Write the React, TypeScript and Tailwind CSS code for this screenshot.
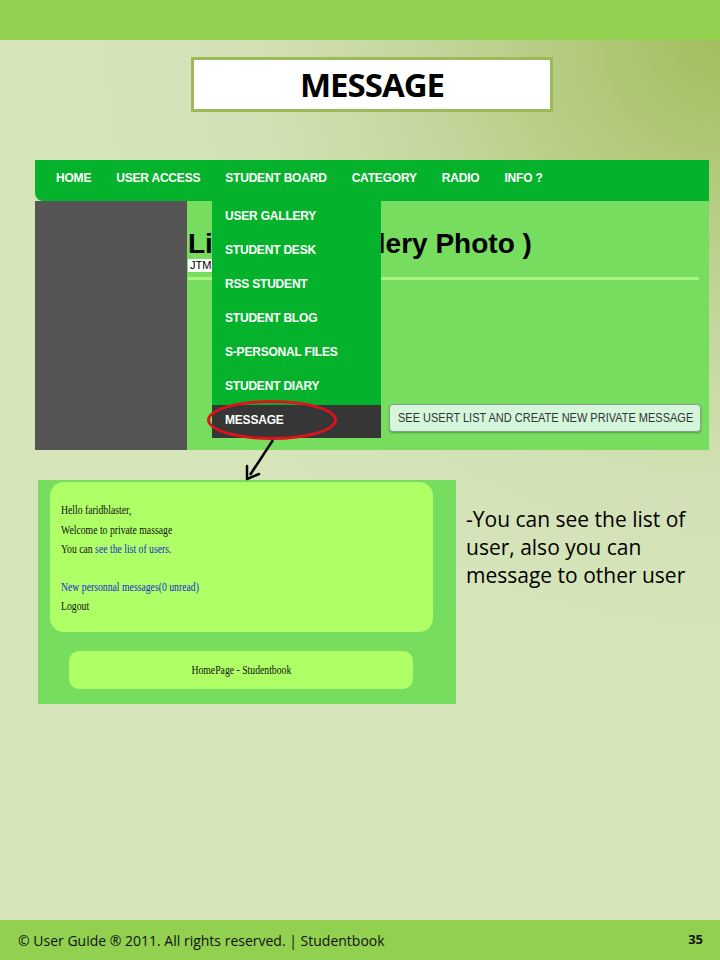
import React from "react";

const navItems = ["HOME", "USER ACCESS", "STUDENT BOARD", "CATEGORY", "RADIO", "INFO ?"];
const boardItems = ["USER GALLERY", "STUDENT DESK", "RSS STUDENT", "STUDENT BLOG", "S-PERSONAL FILES", "STUDENT DIARY"];

function SiteScreenshot() {
  return (
    <div className="relative ml-[35px] mt-[48px] flex h-[290px] w-[674px] flex-col font-['Liberation_Sans',Arial,sans-serif]">
      {/* nav bar */}
      <div className="flex h-[41px] items-center gap-[25px] rounded-bl-[8px] bg-[#05b22c] pb-[5px] pl-[21px] text-[12px] font-bold tracking-[-0.2px] text-white">
        {navItems.map((n) => (
          <span key={n}>{n}</span>
        ))}
      </div>

      <div className="flex flex-1">
        <div className="w-[152px] bg-[#555555]" />
        <div className="relative flex flex-1 flex-col bg-[#77dd5f]">
          <h1 className="pl-[1px] pt-[28px] text-[28px] font-bold leading-[30px] text-black">List ( User Gallery Photo )</h1>
          <div className="ml-[1px] w-[28px] bg-white pl-[2px] text-[11px] leading-[13px] text-black">JTM</div>
          <div className="ml-[1px] mr-[10px] mt-[5px] h-[3px] bg-[#a9f283]" />
          <div className="flex flex-1 items-end justify-end pb-[18px] pr-[8px]">
            <button className="flex h-[28px] w-[312px] items-center overflow-hidden rounded-[4px] border border-[#8aa08a] bg-[#d4f7dc] pl-[8px] shadow-[0_1px_2px_rgba(0,0,0,0.3)]">
              <span className="origin-left scale-x-[0.88] whitespace-nowrap text-[12.5px] text-[#333]">
                SEE USERT LIST AND CREATE NEW PRIVATE MESSAGE
              </span>
            </button>
          </div>
        </div>
      </div>

      {/* dropdown */}
      <div className="absolute left-[177px] top-[41px] flex w-[169px] flex-col bg-[#05b22c] text-[12px] font-bold tracking-[-0.2px] text-white">
        {boardItems.map((b) => (
          <div key={b} className="flex h-[34px] items-center pb-[5px] pl-[13px]">
            {b}
          </div>
        ))}
        <div className="flex h-[33px] items-center bg-[#363636] pb-[4px] pl-[13px]">MESSAGE</div>
      </div>

      {/* red highlight */}
      <div className="absolute left-[172px] top-[240px] h-[40px] w-[130px] rounded-[50%] border-[3px] border-[#e3111b]" />
    </div>
  );
}

function MessagePanel() {
  return (
    <div className="ml-[38px] flex h-[224px] w-[418px] flex-col bg-[#77dd5f] pl-[12px] pt-[2px] font-['Liberation_Serif','Times_New_Roman',serif] text-[#111]">
      <div className="h-[150px] w-[383px] rounded-[14px] bg-[#afff66] pl-[11px] pt-[18px]">
        <div className="origin-left scale-x-[0.72] whitespace-nowrap text-[13.5px] leading-[19.5px]">
          <div>Hello faridblaster,</div>
          <div>Welcome to private massage</div>
          <div>
            You can <span className="text-[#1a2bd0]">see the list of users.</span>
          </div>
          <div className="h-[18px]" />
          <div className="text-[#1a2bd0]">New personnal messages(0 unread)</div>
          <div>Logout</div>
        </div>
      </div>
      <div className="ml-[19px] mt-[19px] flex h-[38px] w-[344px] items-center justify-center rounded-[10px] bg-[#afff66]">
        <span className="scale-x-[0.72] whitespace-nowrap text-[13.5px]">HomePage - Studentbook</span>
      </div>
    </div>
  );
}

export default function App() {
  return (
    <div className="relative flex h-[960px] w-[720px] flex-col overflow-hidden font-['Open_Sans',sans-serif]">
      <div className="h-[40px] bg-[#92d050]" />

      <div className="flex flex-1 flex-col bg-[radial-gradient(ellipse_90%_70%_at_100%_0%,#a2be5c_0%,#c3d69c_45%,#d3e2b6_75%,#d6e4ba_100%)]">
        <div className="ml-[191px] mt-[17px] flex h-[55px] w-[362px] items-center justify-center border-[3px] border-[#9bbb59] bg-white">
          <span className="text-[33px] font-bold tracking-[-1px] text-black">MESSAGE</span>
        </div>

        <SiteScreenshot />

        <div className="mt-[30px] flex">
          <MessagePanel />
          <div className="ml-[10px] mt-[25px] text-[21px] leading-[28px] text-black">
            <div>-You can see the list of</div>
            <div>user, also you can</div>
            <div>message to other user</div>
          </div>
        </div>
      </div>

      <div className="flex h-[40px] items-center justify-between bg-[#92d050] pl-[18px] pr-[17px] text-[14px] text-[#111]">
        <span>© User Guide ® 2011. All rights reserved. | Studentbook</span>
        <span className="text-[13px] font-bold">35</span>
      </div>

      {/* arrow from highlight to panel */}
      <svg className="absolute left-0 top-0" width="720" height="960" viewBox="0 0 720 960">
        <line x1="273" y1="440" x2="250" y2="475" stroke="#000" strokeWidth="2.5" />
        <path d="M247 479 L247 466 M247 479 L259 474" stroke="#000" strokeWidth="2.5" fill="none" strokeLinecap="round" />
      </svg>
    </div>
  );
}
